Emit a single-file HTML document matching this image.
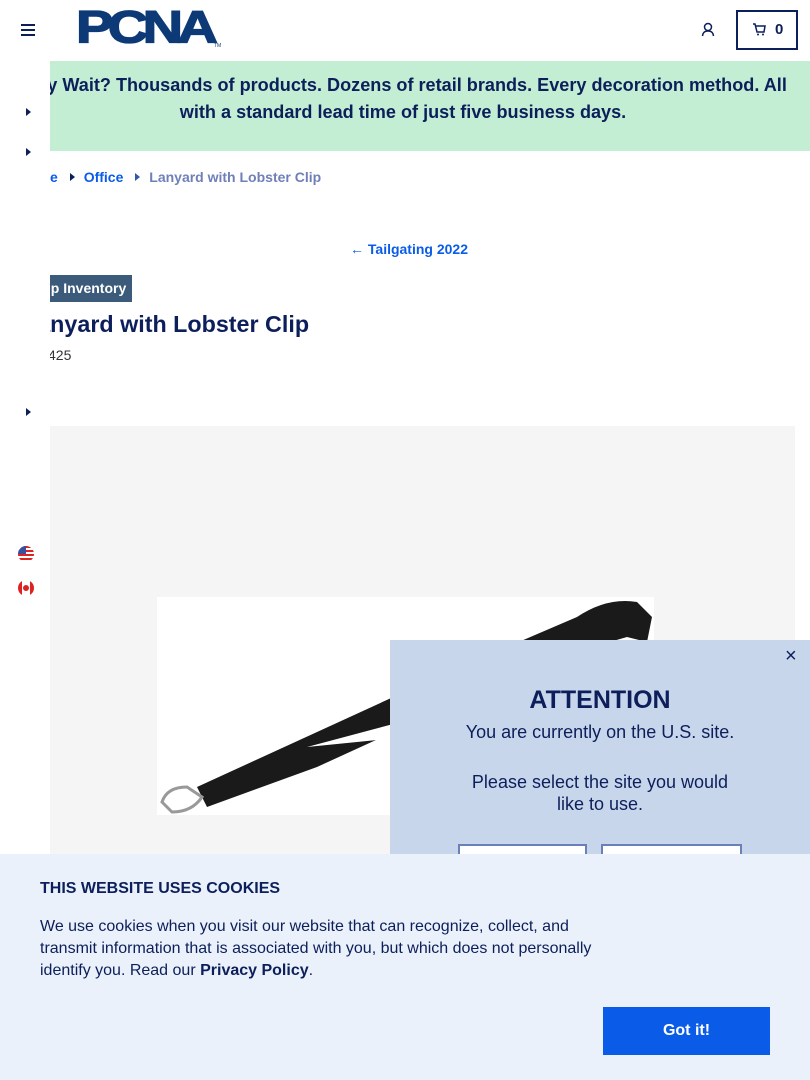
<!DOCTYPE html>
<html><head><meta charset="utf-8"><style>
*{margin:0;padding:0;box-sizing:border-box}
body{width:810px;height:1080px;overflow:hidden;position:relative;background:#fff;font-family:"Liberation Sans",Arial,sans-serif;color:#0c1f5a}
.abs{position:absolute}
.tri{width:0;height:0;border-top:4px solid transparent;border-bottom:4px solid transparent;border-left:5px solid #0c1f5a}
</style></head><body>
<div class="abs" style="left:21px;top:24px;width:14px">
 <div style="height:2px;background:#0c1f5a;margin-bottom:3px"></div>
 <div style="height:2px;background:#0c1f5a;margin-bottom:3px"></div>
 <div style="height:2px;background:#0c1f5a"></div></div>
<div class="abs" style="left:76px;top:2px;font-weight:900;font-size:50px;line-height:56px;color:#0d3a77;letter-spacing:-5px;transform:scale(1.12,0.9);transform-origin:left top;-webkit-text-stroke:1.5px #0d3a77">PCNA</div>
<div class="abs" style="left:214px;top:43px;font-size:5px;color:#0d3a77">TM</div>
<svg class="abs" style="left:701px;top:22px" width="14" height="15" viewBox="0 0 14 15"><circle cx="7" cy="5" r="3.5" fill="none" stroke="#0c1f5a" stroke-width="1.5"/><path d="M1.5 14 C2 10 4 9 7 9 C10 9 12 10 12.5 14" fill="none" stroke="#0c1f5a" stroke-width="1.5"/></svg>
<div class="abs" style="left:736px;top:10px;width:62px;height:40px;border:2px solid #0c1f5a"></div>
<svg class="abs" style="left:752px;top:23px" width="14" height="13" viewBox="0 0 14 13"><path d="M1 1h2l2 8h7l1-6H4" fill="none" stroke="#0c1f5a" stroke-width="1.5"/><circle cx="6" cy="11.5" r="1" fill="#0c1f5a"/><circle cx="11" cy="11.5" r="1" fill="#0c1f5a"/></svg>
<div class="abs" style="left:775px;top:21px;font-weight:700;font-size:15px">0</div>
<div class="abs" style="left:50px;top:61px;width:760px;height:90px;background:#c4eed4"></div>
<div class="abs" style="left:-22px;top:72px;width:850px;text-align:center;font-weight:700;font-size:18.1px;line-height:27px;white-space:nowrap">Why Wait? Thousands of products. Dozens of retail brands. Every decoration method. All<br>with a standard lead time of just five business days.</div>
<div class="abs" style="left:0;top:61px;width:50px;height:400px;background:#fff"></div>
<div class="abs tri" style="left:26px;top:108px"></div>
<div class="abs tri" style="left:26px;top:148px"></div>
<div class="abs tri" style="left:26px;top:408px"></div>
<div class="abs" style="left:50px;top:169px;font-size:14px;font-weight:700;color:#0a5ce8;white-space:nowrap">e <span class="tri" style="display:inline-block;margin:0 9px 1px 8px"></span>Office <span class="tri" style="display:inline-block;margin:0 9px 1px 8px;border-left-color:#3358a8"></span><span style="color:#6f7fb8">Lanyard with Lobster Clip</span></div>
<div class="abs" style="left:350px;top:241px;font-size:14px;font-weight:700;color:#0a5ce8">← Tailgating 2022</div>
<div class="abs" style="left:50px;top:275px;width:82px;height:27px;background:#3c5b7a;color:#fff;font-size:14px;font-weight:700;line-height:27px;overflow:hidden;white-space:nowrap"><span style="margin-left:-21px">Ship Inventory</span></div>
<div class="abs" style="left:50px;top:308px;width:300px;overflow:hidden;white-space:nowrap;font-size:23.3px;font-weight:700;line-height:32px"><span style="margin-left:-27px">Lanyard with Lobster Clip</span></div>
<div class="abs" style="left:50px;top:347px;font-size:14px;color:#333;overflow:hidden;width:40px;white-space:nowrap"><span style="margin-left:-2px">425</span></div>
<div class="abs" style="left:50px;top:426px;width:745px;height:440px;background:#f5f5f5"></div>
<div class="abs" style="left:157px;top:597px;width:497px;height:218px;background:#fff"></div>
<svg class="abs" style="left:157px;top:597px" width="497" height="218" viewBox="0 0 497 218">
<path d="M40 190 L280 80 L420 20 Q450 0 480 5 L495 20 L490 45 L470 40 L400 60 L160 170 L50 210 Z" fill="#1a1a1a"/>
<path d="M150 150 L300 110 L250 140 Z" fill="#fff"/>
<path d="M5 205 Q10 190 30 190 L45 200 Q35 215 15 215 Z" fill="none" stroke="#999" stroke-width="3"/>
</svg>
<div class="abs" style="left:18px;top:546px;width:16px;height:16px;border-radius:50%;background:repeating-linear-gradient(#d22 0 2px,#fff 2px 4px);overflow:hidden"><div style="width:8px;height:8px;background:#3b4ea0"></div></div>
<div class="abs" style="left:18px;top:580px;width:16px;height:16px;border-radius:50%;background:linear-gradient(90deg,#d22 0 4px,#fff 4px 12px,#d22 12px)"><div style="position:absolute;left:5px;top:5px;width:6px;height:6px;background:#d22;border-radius:50%"></div></div>
<div class="abs" style="left:390px;top:640px;width:420px;height:240px;background:#c8d6ec"></div>
<div class="abs" style="left:785px;top:645px;font-size:20px">×</div>
<div class="abs" style="left:390px;top:686px;width:420px;text-align:center;font-size:25px;font-weight:700">ATTENTION</div>
<div class="abs" style="left:390px;top:722px;width:420px;text-align:center;font-size:18px;line-height:21px">You are currently on the U.S. site.</div>
<div class="abs" style="left:390px;top:771px;width:420px;text-align:center;font-size:18px;line-height:22px">Please select the site you would<br>like to use.</div>
<div class="abs" style="left:458px;top:844px;width:129px;height:20px;border:2px solid #6a80b8;background:#fff"></div>
<div class="abs" style="left:601px;top:844px;width:141px;height:20px;border:2px solid #6a80b8;background:#fff"></div>
<div class="abs" style="left:0;top:854px;width:810px;height:226px;background:#eaf1fa"></div>
<div class="abs" style="left:40px;top:880px;font-size:16px;font-weight:700">THIS WEBSITE USES COOKIES</div>
<div class="abs" style="left:40px;top:916px;width:570px;font-size:16px;line-height:22px">We use cookies when you visit our website that can recognize, collect, and transmit information that is associated with you, but which does not personally identify you. Read our <b>Privacy Policy</b>.</div>
<div class="abs" style="left:603px;top:1007px;width:167px;height:48px;background:#0a5ce8;color:#fff;font-size:16px;font-weight:700;text-align:center;line-height:48px">Got it!</div>
</body></html>
